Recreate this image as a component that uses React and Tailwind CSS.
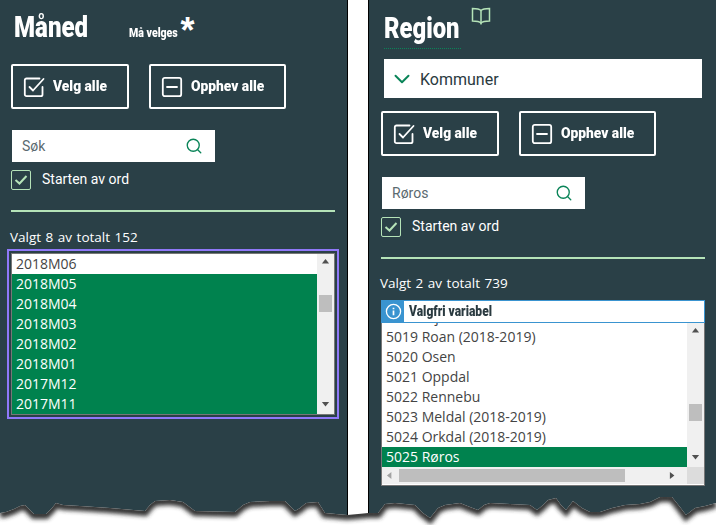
import React from "react";
import { Search, ChevronDown } from "lucide-react";

const CheckBoxIcon = ({ className }) => (
  <svg viewBox="0 0 22 22" className={className} fill="none" stroke="currentColor" strokeWidth="1.8" strokeLinecap="round" strokeLinejoin="round">
    <path d="M19.5 11v7.500a1.700 1.700 0 0 1-1.700 1.700H3.500a1.700 1.700 0 0 1-1.700-1.700V4.200a1.700 1.700 0 0 1 1.700-1.700h13" />
    <path d="M6.500 11l3.500 3.500L20.500 3" />
  </svg>
);
const MinusIcon = ({ className }) => (
  <svg viewBox="0 0 22 22" className={className} fill="none" stroke="currentColor" strokeWidth="1.8" strokeLinecap="round" strokeLinejoin="round">
    <rect x="1.800" y="1.800" width="18.400" height="18.400" rx="2" />
    <path d="M6 11h10" />
  </svg>
);
const Arrow = ({ dir }) => {
  const p = { up: "M1 6 L5 1 L9 6Z", down: "M1 1 L5 6 L9 1Z", left: "M6 1 L1 5 L6 9Z", right: "M1 1 L6 5 L1 9Z" }[dir];
  return (
    <svg viewBox="0 0 10 10" className="h-[9px] w-[9px]" fill={dir === "left" ? "#a3a3a3" : "#505050"}>
      <path d={p} />
    </svg>
  );
};

const Buttons = () => (
  <div className="flex gap-5">
    <button className="flex h-[45px] w-[118px] items-center rounded-[2px] border-2 border-white pl-[10px] text-white">
      <CheckBoxIcon className="h-[22px] w-[22px]" />
      <span className="ml-[8px] inline-block origin-left scale-x-[0.92] whitespace-nowrap text-[15px] font-black font-['Roboto',sans-serif]">Velg alle</span>
    </button>
    <button className="flex h-[45px] w-[137px] items-center rounded-[2px] border-2 border-white pl-[10px] text-white">
      <MinusIcon className="h-[22px] w-[22px]" />
      <span className="ml-[8px] inline-block origin-left scale-x-[0.92] whitespace-nowrap text-[15px] font-black font-['Roboto',sans-serif]">Opphev alle</span>
    </button>
  </div>
);

const SearchBox = ({ value }) => (
  <div className="ml-px flex h-8 w-[203px] items-center justify-between bg-white pl-[10px] pr-[12px]">
    <span className="text-sm text-[#5b6a70] font-['Roboto',sans-serif]">{value}</span>
    <Search className="h-[18px] w-[18px] text-[#0a8458]" strokeWidth={1.8} />
  </div>
);

const Starts = () => (
  <div className="mt-2 flex h-5 items-center">
    <div className="flex h-5 w-5 items-center justify-center rounded-[2px] border border-[#b5e3b8]">
      <svg viewBox="0 0 16 16" className="h-4 w-4" fill="none" stroke="#b5e3b8" strokeWidth="2"><path d="M2.500 8l4 3.500L13.500 4" /></svg>
    </div>
    <span className="ml-[11px] -mt-[2px] text-sm text-white font-['Roboto',sans-serif]">Starten av ord</span>
  </div>
);

const Row = ({ t, selected }) => (
  <div className={`flex h-5 items-center whitespace-nowrap pl-1 text-sm font-['Open_Sans',sans-serif] ${selected ? "bg-[#00824e] text-white" : "bg-white text-[#444]"}`}>{t}</div>
);

const edgeL = "M0 513 L6 512 L14 509 L20 506 L25 505 L30 510 L34 514 L46 514 L52 508 L56 503 L63 505 L80 506 L110 508 L145 511 L150 505 L155 501 L170 500 L183 502 L195 511 L235 512 L243 505 L250 502 L270 501 L285 501 L295 511 L300 508 L306 503 L318 502 L325 513 L347 515 L358 514 L368 513 L378 513 L385 504 L395 503 L415 505 L423 513 L430 518 L438 508 L445 505 L460 503 L470 507 L478 510 L484 505 L490 503 L510 504 L530 505 L537 510 L543 505 L548 500 L556 498 L561 505 L566 510 L573 501 L582 508 L590 512 L600 512 L612 508 L625 505 L640 504 L650 502 L660 497 L672 497 L680 507 L686 515 L695 508 L705 506 L716 503";

const TornEdge = () => (
  <svg className="pointer-events-none absolute bottom-0 left-0 h-[40px] w-[716px]" viewBox="0 485 716 40">
    <defs>
      <filter id="blur" x="-5%" y="-50%" width="110%" height="200%"><feGaussianBlur stdDeviation="2.200" /></filter>
      <clipPath id="below"><path d={`${edgeL} L716 525 L0 525 Z`} /></clipPath>
    </defs>
    <path d={`${edgeL} L716 525 L0 525 Z`} fill="#fff" />
    <g clipPath="url(#below)">
      <path d={edgeL} fill="none" stroke="#333" strokeWidth="8" filter="url(#blur)" transform="translate(0 1)" />
    </g>
  </svg>
);

const months = ["2018M05", "2018M04", "2018M03", "2018M02", "2018M01", "2017M12", "2017M11"];
const kommuner = ["5018 Åfjord", "5019 Roan (2018-2019)", "5020 Osen", "5021 Oppdal", "5022 Rennebu", "5023 Meldal (2018-2019)", "5024 Orkdal (2018-2019)"];

export default function App() {
  return (
    <div className="relative flex h-[525px] w-[716px] overflow-hidden bg-white">
      <section className="flex h-full w-[348px] shrink-0 flex-col border-r border-black bg-[#2a4047] pl-[11px]">
        <div className="flex h-[64px] items-start pl-[3px] pt-[7px] text-white">
          <h2 className="w-[115px] origin-left scale-x-[0.83] text-[29px] font-black leading-[40px] font-['Roboto',sans-serif]">Måned</h2>
          <span className="mt-[17px] inline-block origin-left scale-x-[0.88] whitespace-nowrap text-[12px] font-black font-['Roboto',sans-serif]">Må velges</span>
          <span className="-ml-[4px] mt-[6px] text-[36px] leading-[36px] font-bold font-['Liberation_Sans',sans-serif]">*</span>
        </div>
        <Buttons />
        <div className="mt-[21px]"><SearchBox value="Søk" /></div>
        <Starts />
        <div className="mt-5 h-[2px] w-[324px] bg-[#b5e3b8]" />
        <div className="-ml-px mt-[15px] h-[21px] whitespace-nowrap text-[13.5px] leading-[20px] [word-spacing:1px] text-white font-['Open_Sans',sans-serif]">Valgt 8 av totalt 152</div>
        <div className="-ml-1 mt-[1px] h-[170px] w-[332px] border-2 border-[#8f78f8] p-[2px]">
          <div className="flex h-full border border-[#777] bg-white">
            <div className="min-w-0 flex-1">
              <Row t="2018M06" />
              {months.map((m) => <Row key={m} t={m} selected />)}
            </div>
            <div className="flex w-[17px] shrink-0 flex-col items-center bg-[#f0f0f0] py-[4px]">
              <Arrow dir="up" />
              <div className="mt-[28px] h-[17px] w-[13px] bg-[#bebebe]" />
              <div className="mt-auto"><Arrow dir="down" /></div>
            </div>
          </div>
        </div>
      </section>

      <div className="w-5 shrink-0 bg-white" />

      <section className="flex h-full min-w-0 flex-1 flex-col border-l border-black bg-[#2a4047] pl-3">
        <div className="flex h-[59px] items-start pl-[3px] pt-[8px] text-white">
          <div className="w-[77px]">
            <h2 className="w-[77px] origin-left scale-x-[0.82] whitespace-nowrap text-[29px] font-black leading-[40px] font-['Roboto',sans-serif]">Region</h2>
            <div className="border-b border-dotted border-[#0a8458]" />
          </div>
          <svg viewBox="0 0 20 18" className="ml-[10px] -mt-[1px] h-[18px] w-[20px]" fill="none" stroke="#b5e3b8" strokeWidth="1.500">
            <path d="M10 3.500C8.500 2 6 1.500 1.500 1.500v12.500c4.500 0 7 .5 8.500 2 1.500-1.500 4-2 8.500-2V1.500C14 1.500 11.500 2 10 3.500z" />
            <path d="M10 3.500V17.500" />
          </svg>
        </div>
        <div className="ml-[3px] flex h-[39px] w-[318px] items-center bg-white pl-[5px]">
          <ChevronDown className="h-[26px] w-[26px] text-[#0a8458]" strokeWidth={1.800} />
          <span className="ml-[5px] mt-[2px] text-[16px] text-[#2a3a40] font-['Roboto',sans-serif]">Kommuner</span>
        </div>
        <div className="mt-[13px]"><Buttons /></div>
        <div className="mt-[21px]"><SearchBox value="Røros" /></div>
        <Starts />
        <div className="mt-5 h-[2px] w-[324px] bg-[#b5e3b8]" />
        <div className="-ml-px mt-[14px] h-[21px] whitespace-nowrap text-[13.5px] leading-[20px] [word-spacing:1px] text-white font-['Open_Sans',sans-serif]">Valgt 2 av totalt 739</div>
        <div className="mt-[6px] flex h-[23px] w-[324px] items-stretch border border-[#3a94d0] bg-white">
          <div className="flex w-[22px] items-center justify-center bg-[#3a94d0]">
            <svg viewBox="0 0 18 18" className="h-[17px] w-[17px]" fill="none" stroke="#fff" strokeWidth="1.400">
              <circle cx="9" cy="9" r="7.500" />
              <path d="M9 8v5M9 5v1.500" strokeWidth="1.800" />
            </svg>
          </div>
          <span className="ml-[5px] inline-block origin-left scale-x-[0.86] whitespace-nowrap text-[14px] font-black leading-[21px] text-[#2a3a40] font-['Roboto',sans-serif]">Valgfri variabel</span>
        </div>
        <div className="h-[163px] w-[324px] border border-t-0 border-[#777] bg-white">
          <div className="flex h-[144px]">
            <div className="min-w-0 flex-1 overflow-hidden">
              <div className="-mt-4">
                {kommuner.map((k) => <Row key={k} t={k} />)}
                <Row t="5025 Røros" selected />
              </div>
            </div>
            <div className="flex w-[17px] shrink-0 flex-col items-center bg-[#f0f0f0] py-[4px]">
              <Arrow dir="up" />
              <div className="mt-[68px] h-[17px] w-[13px] bg-[#bebebe]" />
              <div className="mt-auto"><Arrow dir="down" /></div>
            </div>
          </div>
          <div className="flex h-[17px] items-center bg-[#f0f0f0]">
            <div className="flex w-[17px] justify-center"><Arrow dir="left" /></div>
            <div className="h-[13px] w-[226px] bg-[#bebebe]" />
            <div className="ml-auto flex w-[17px] justify-center"><Arrow dir="right" /></div>
            <div className="ml-[5px] h-[17px] w-[17px] bg-[#dcdcdc]" />
          </div>
        </div>
      </section>

      <TornEdge />
    </div>
  );
}
